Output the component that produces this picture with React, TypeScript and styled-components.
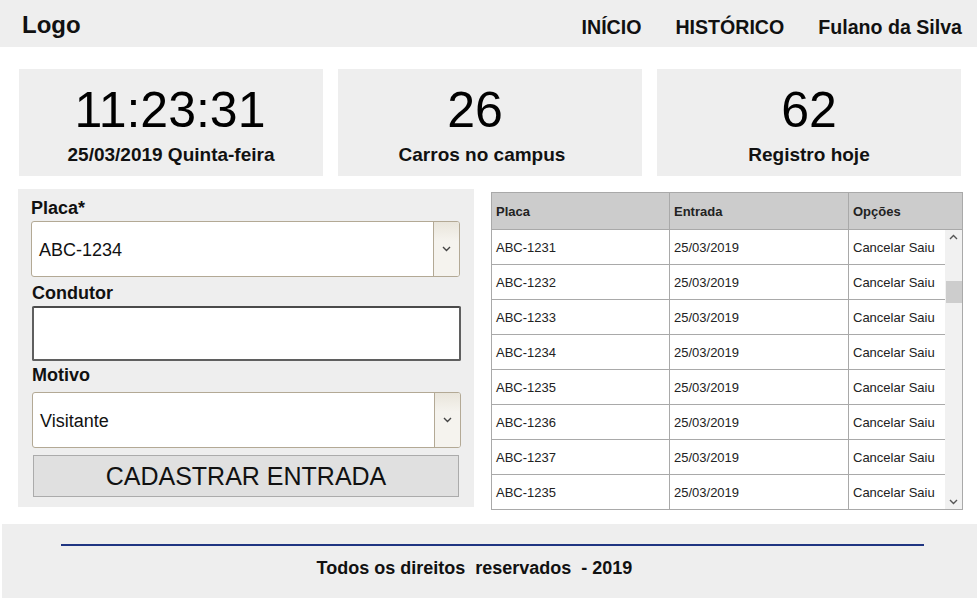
import React from "react";
import styled, { createGlobalStyle } from "styled-components";

const Global = createGlobalStyle`
  html, body { margin: 0; padding: 0; background: #ffffff; }
  body { font-family: "Liberation Sans", Arial, sans-serif; color: #111; }
  * { box-sizing: border-box; }
`;

const Page = styled.div`
  width: 977px;
  height: 600px;
  display: flex;
  flex-direction: column;
  overflow: hidden;
`;

const Header = styled.header`
  height: 47px;
  background: #eeeeee;
  display: flex;
  align-items: center;
  justify-content: space-between;
  padding: 0 15px 0 22px;
`;

const Logo = styled.div`
  font-weight: 700;
  font-size: 24px;
  margin-top: 3px;
`;

const Nav = styled.nav`
  display: flex;
  gap: 34px;
  margin-top: 8px;
`;

const NavItem = styled.span`
  font-weight: 700;
  font-size: 19.6px;
`;

const Cards = styled.section`
  display: grid;
  grid-template-columns: 304px 304px 304px;
  column-gap: 15px;
  padding: 22px 0 0 19px;
`;

const Card = styled.div`
  height: 107px;
  background: #eeeeee;
  display: flex;
  flex-direction: column;
  align-items: center;
  padding-top: 14px;
`;

const BigValue = styled.div<{ $shift?: number }>`
  font-size: 50px;
  line-height: 54px;
  color: #000;
  margin-right: ${(p) => (p.$shift ?? 0) * 2}px;
`;

const CardLabel = styled.div<{ $shift?: number }>`
  font-size: 19px;
  font-weight: 700;
  line-height: 22px;
  margin-top: 7px;
  margin-right: ${(p) => (p.$shift ?? 0) * 2}px;
`;

const Main = styled.section`
  display: flex;
  padding: 13px 0 0 18px;
  gap: 17px;
  align-items: flex-start;
`;

const FormPanel = styled.div`
  width: 456px;
  height: 318px;
  background: #eeeeee;
  padding: 8px 13px 0 13px;
  display: flex;
  flex-direction: column;
`;

const Label = styled.label<{ $indent?: number; $mt?: number }>`
  font-size: 18px;
  font-weight: 700;
  line-height: 22px;
  padding-left: ${(p) => p.$indent ?? 0}px;
  margin-top: ${(p) => p.$mt ?? 0}px;
  margin-bottom: 2px;
`;

const SelectBox = styled.div<{ $indent?: number; $mt?: number }>`
  margin-left: ${(p) => p.$indent ?? 0}px;
  margin-top: ${(p) => p.$mt ?? 0}px;
  width: 429px;
  height: 56px;
  background: #ffffff;
  border: 1px solid #b3a995;
  border-radius: 3px;
  display: flex;
  align-items: stretch;
  overflow: hidden;
`;

const SelectValue = styled.div`
  flex: 1;
  display: flex;
  align-items: center;
  padding: 2px 0 0 7px;
  font-size: 18px;
  color: #111;
`;

const SelectArrow = styled.div`
  width: 26px;
  border-left: 1px solid #b3a995;
  background: linear-gradient(#e9e5db, #f5f3ee 35%, #f5f3ee);
  display: flex;
  align-items: center;
  justify-content: center;
`;

const TextInput = styled.div`
  margin-left: 1px;
  width: 429px;
  height: 55px;
  background: #ffffff;
  border: 2px solid #5f5f5f;
  border-top-color: #4a4a4a;
  border-radius: 2px;
`;

const SubmitButton = styled.button`
  margin: 7px 0 0 2px;
  width: 426px;
  height: 42px;
  background: #e0e0e0;
  border: 1px solid #ababab;
  font-family: "Liberation Sans", Arial, sans-serif;
  font-size: 25px;
  color: #111;
  padding: 0;
  line-height: 40px;
`;

const Table = styled.div`
  margin-top: 3px;
  width: 472px;
  border: 1px solid #a9a9a9;
  display: flex;
  flex-direction: column;
`;

const HeadRow = styled.div`
  height: 37px;
  display: grid;
  grid-template-columns: 178px 179px 1fr;
  background: #cccccc;
  border-bottom: 1px solid #a9a9a9;
`;

const HeadCell = styled.div<{ $last?: boolean }>`
  display: flex;
  align-items: center;
  padding-left: 4px;
  font-size: 13px;
  font-weight: 700;
  color: #222;
  border-right: ${(p) => (p.$last ? "none" : "1px solid #a9a9a9")};
`;

const Body = styled.div`
  display: flex;
  height: 279px;
`;

const Rows = styled.div`
  flex: 1;
  display: flex;
  flex-direction: column;
`;

const Row = styled.div<{ $last?: boolean }>`
  height: 35px;
  flex-shrink: 0;
  display: grid;
  grid-template-columns: 178px 179px 1fr;
  border-bottom: ${(p) => (p.$last ? "none" : "1px solid #a9a9a9")};
`;

const Cell = styled.div<{ $last?: boolean }>`
  display: flex;
  align-items: center;
  padding-left: 4px;
  font-size: 13px;
  color: #222;
  border-right: ${(p) => (p.$last ? "none" : "1px solid #a9a9a9")};
  white-space: nowrap;
`;

const Scrollbar = styled.div`
  width: 17px;
  background: #f1f1f1;
  position: relative;
  display: flex;
  flex-direction: column;
  justify-content: space-between;
  align-items: center;
  padding: 4px 0 4px;
`;

const Thumb = styled.div`
  position: absolute;
  left: 1px;
  right: 0;
  top: 51px;
  height: 22px;
  background: #cdcdcd;
`;

const Footer = styled.footer`
  margin: 14px 0 0 2px;
  height: 74px;
  background: #eeeeee;
  display: flex;
  flex-direction: column;
  align-items: center;
  padding-top: 20px;
`;

const Rule = styled.div`
  width: 863px;
  height: 2px;
  background: #1f3582;
  margin-left: 6px;
`;

const FooterText = styled.div`
  font-size: 18px;
  font-weight: 700;
  margin-top: 12px;
  margin-right: 30px;
  white-space: pre;
`;

const Chevron = ({ up, color = "#333" }: { up?: boolean; color?: string }) => (
  <svg width="9" height="6" viewBox="0 0 9 6">
    <path
      d={up ? "M1 5 L4.5 1.5 L8 5" : "M1 1 L4.5 4.5 L8 1"}
      fill="none"
      stroke={color}
      strokeWidth="1.4"
    />
  </svg>
);

const rows = [
  "ABC-1231",
  "ABC-1232",
  "ABC-1233",
  "ABC-1234",
  "ABC-1235",
  "ABC-1236",
  "ABC-1237",
  "ABC-1235",
];

export default function App() {
  return (
    <Page>
      <Global />
      <Header>
        <Logo>Logo</Logo>
        <Nav>
          <NavItem>INÍCIO</NavItem>
          <NavItem>HISTÓRICO</NavItem>
          <NavItem>Fulano da Silva</NavItem>
        </Nav>
      </Header>
      <Cards>
        <Card>
          <BigValue $shift={1}>11:23:31</BigValue>
          <CardLabel>25/03/2019 Quinta-feira</CardLabel>
        </Card>
        <Card>
          <BigValue $shift={15}>26</BigValue>
          <CardLabel $shift={8}>Carros no campus</CardLabel>
        </Card>
        <Card>
          <BigValue>62</BigValue>
          <CardLabel>Registro hoje</CardLabel>
        </Card>
      </Cards>
      <Main>
        <FormPanel>
          <Label>Placa*</Label>
          <SelectBox>
            <SelectValue>ABC-1234</SelectValue>
            <SelectArrow>
              <Chevron color="#444" />
            </SelectArrow>
          </SelectBox>
          <Label $indent={1} $mt={5}>
            Condutor
          </Label>
          <TextInput />
          <Label $indent={1} $mt={3}>
            Motivo
          </Label>
          <SelectBox $indent={1} $mt={4}>
            <SelectValue>Visitante</SelectValue>
            <SelectArrow>
              <Chevron color="#444" />
            </SelectArrow>
          </SelectBox>
          <SubmitButton>CADASTRAR ENTRADA</SubmitButton>
        </FormPanel>
        <Table>
          <HeadRow>
            <HeadCell>Placa</HeadCell>
            <HeadCell>Entrada</HeadCell>
            <HeadCell $last>Opções</HeadCell>
          </HeadRow>
          <Body>
            <Rows>
              {rows.map((r, i) => (
                <Row key={i} $last={i === rows.length - 1}>
                  <Cell>{r}</Cell>
                  <Cell>25/03/2019</Cell>
                  <Cell $last>Cancelar Saiu</Cell>
                </Row>
              ))}
            </Rows>
            <Scrollbar>
              <Chevron up color="#555" />
              <Thumb />
              <Chevron color="#555" />
            </Scrollbar>
          </Body>
        </Table>
      </Main>
      <Footer>
        <Rule />
        <FooterText>Todos os direitos  reservados  - 2019</FooterText>
      </Footer>
    </Page>
  );
}
